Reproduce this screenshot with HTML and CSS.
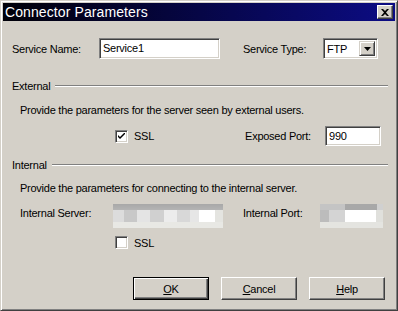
FILE: index.html
```html
<!DOCTYPE html>
<html lang="en">
<head>
    <meta charset="UTF-8">
    <title>Connector Parameters</title>
    <link rel="stylesheet" href="styles.css">
</head>
<body>
    <div class="window">
        <div class="titlebar">
            <span class="title">Connector Parameters</span>
            <span class="close">
                <svg width="8" height="7" viewBox="0 0 8 7"><path d="M0 0h2l2 2 2-2h2L5 3.5 8 7H6L4 5 2 7H0l3-3.5z" fill="#000"/></svg>
            </span>
        </div>
        <div class="content">
            <div class="row row-top">
                <label class="lbl lbl-name">Service Name:</label>
                <div class="field field-name">Service1</div>
                <label class="lbl lbl-type">Service Type:</label>
                <div class="combo">
                    <span class="combo-text">FTP</span>
                    <span class="combo-btn">
                        <svg width="7" height="4" viewBox="0 0 7 4"><path d="M0 0h7L3.5 4z" fill="#000"/></svg>
                    </span>
                </div>
            </div>

            <div class="group group-ext">
                <span>External</span>
                <span class="rule"></span>
            </div>
            <div class="desc desc-ext">Provide the parameters for the server seen by external users.</div>
            <div class="row row-ssl">
                <span class="check">
                    <svg width="7" height="7" viewBox="0 0 7 7"><path d="M0 2l2 2 5-5v2L2 6 0 4z" fill="#000"/></svg>
                </span>
                <span class="check-lbl">SSL</span>
                <label class="lbl lbl-port">Exposed Port:</label>
                <div class="field field-port">990</div>
            </div>

            <div class="group group-int">
                <span>Internal</span>
                <span class="rule"></span>
            </div>
            <div class="desc desc-int">Provide the parameters for connecting to the internal server.</div>
            <div class="row row-server">
                <label class="lbl lbl-server">Internal Server:</label>
                <div class="blur blur-server"></div>
                <label class="lbl lbl-iport">Internal Port:</label>
                <div class="blur blur-port"></div>
            </div>
            <div class="row row-ssl2">
                <span class="check"></span>
                <span class="check-lbl">SSL</span>
            </div>

            <div class="buttons">
                <button class="btn btn-default"><u>O</u>K</button>
                <button class="btn"><u>C</u>ancel</button>
                <button class="btn"><u>H</u>elp</button>
            </div>
        </div>
    </div>
</body>
</html>
```

FILE: styles.css
```css
body {
    margin: 0;
    font-family: "Liberation Sans", Arial, sans-serif;
    font-size: 11px;
    letter-spacing: -0.25px;
    color: #000;
    background: #d4d0c8;
}
.window {
    width: 398px;
    height: 311px;
    box-sizing: border-box;
    background: #d4d0c8;
    border: 1px solid;
    border-color: #d4d0c8 #404040 #404040 #d4d0c8;
    box-shadow: inset 1px 1px #fff, inset -1px -1px #808080;
    padding: 2px;
}
.titlebar {
    height: 18px;
    display: flex;
    align-items: center;
    justify-content: space-between;
    padding: 0 2px;
    background: linear-gradient(to right, #000008, #0c0c84);
    color: #fff;
}
.title {
    font-size: 14px;
    letter-spacing: 0.1px;
}
.close {
    width: 16px;
    height: 14px;
    box-sizing: border-box;
    display: flex;
    align-items: center;
    justify-content: center;
    background: #d4d0c8;
    border: 1px solid;
    border-color: #fff #404040 #404040 #fff;
    box-shadow: inset -1px -1px #808080;
}
.content {
    display: flex;
    flex-direction: column;
    padding: 0 7px 0 9px;
}
.row {
    display: flex;
    align-items: center;
}
.row-top { margin-top: 17px; height: 21px; }
.lbl-name { width: 87px; }
.lbl-type { margin-left: 23px; width: 80px; }
.field {
    box-sizing: border-box;
    height: 21px;
    background: #fff;
    border: 1px solid;
    border-color: #808080 #fff #fff #808080;
    box-shadow: inset 1px 1px #404040, inset -1px -1px #d4d0c8;
    padding: 3px 0 0 3px;
}
.field-name { width: 121px; }
.combo {
    box-sizing: border-box;
    width: 55px;
    height: 21px;
    display: flex;
    background: #fff;
    border: 1px solid;
    border-color: #808080 #fff #fff #808080;
    box-shadow: inset 1px 1px #404040, inset -1px -1px #d4d0c8;
    padding: 2px;
}
.combo-text {
    flex: 1;
    padding: 2px 0 0 1px;
}
.combo-btn {
    width: 16px;
    box-sizing: border-box;
    display: flex;
    align-items: center;
    justify-content: center;
    background: #d4d0c8;
    border: 1px solid;
    border-color: #d4d0c8 #404040 #404040 #d4d0c8;
    box-shadow: inset 1px 1px #fff, inset -1px -1px #808080;
}
.group {
    display: flex;
    align-items: center;
    height: 14px;
}
.group-ext { margin-top: 20px; }
.group-int { margin-top: 12px; }
.rule {
    flex: 1;
    margin-left: 5px;
    height: 0;
    border-top: 1px solid #808080;
    border-bottom: 1px solid #fff;
}
.desc {
    height: 14px;
    line-height: 14px;
    padding-left: 8px;
}
.desc-ext { margin-top: 10px; }
.desc-int { margin-top: 9px; }
.row-ssl { margin-top: 9px; height: 20px; }
.check {
    width: 13px;
    height: 13px;
    box-sizing: border-box;
    margin-left: 103px;
    display: flex;
    align-items: center;
    justify-content: center;
    background: #fff;
    border: 1px solid;
    border-color: #808080 #fff #fff #808080;
    box-shadow: inset 1px 1px #404040, inset -1px -1px #d4d0c8;
}
.check-lbl { margin-left: 6px; }
.lbl-port { margin-left: 91px; width: 80px; }
.field-port { width: 56px; height: 20px; }
.row-server { margin-top: 7px; height: 22px; }
.lbl-server { padding-left: 8px; width: 93px; }
.lbl-iport { margin-left: 20px; width: 77px; }
.blur {
    height: 24px;
    margin-top: 6px;
}
.blur-server {
    width: 110px;
    background:
        linear-gradient(#a8a8a8, #b4b4b4) top / 100% 6px no-repeat,
        linear-gradient(to right, #dcdcdc 0 10%, #c8c8c8 10% 22%, #e4e4e4 22% 34%, #d0d0d0 34% 46%, #ececec 46% 58%, #d8d8d8 58% 70%, #e6e6e6 70% 78%, #fff 78% 93%, #e4e4e0 93%) 0 6px / 100% 12px no-repeat,
        #e8e8e4;
}
.blur-port {
    width: 63px;
    background:
        linear-gradient(to right, #c4c4c4 0 40%, #a8a8a8 40% 90%, #d0d0d0 90%) top / 100% 6px no-repeat,
        linear-gradient(to right, #bcbcbc 0 15%, #d4d4d4 15% 40%, #fff 40% 89%, #e0e0dc 89%) 0 6px / 100% 12px no-repeat,
        #e4e4e0;
}
.row-ssl2 { margin-top: 12px; height: 13px; }
.buttons {
    display: flex;
    justify-content: flex-end;
    gap: 12px;
    margin-top: 28px;
    padding-right: 3px;
}
.btn {
    width: 76px;
    height: 23px;
    box-sizing: border-box;
    font-family: "Liberation Sans", Arial, sans-serif;
    font-size: 11px;
    letter-spacing: -0.25px;
    color: #000;
    background: #d4d0c8;
    border: 1px solid;
    border-color: #fff #404040 #404040 #fff;
    box-shadow: inset -1px -1px #808080;
    padding: 0;
}
.btn-default {
    border: 1px solid #000;
    box-shadow: inset 1px 1px #fff, inset -1px -1px #404040, inset -2px -2px #808080;
}
```
